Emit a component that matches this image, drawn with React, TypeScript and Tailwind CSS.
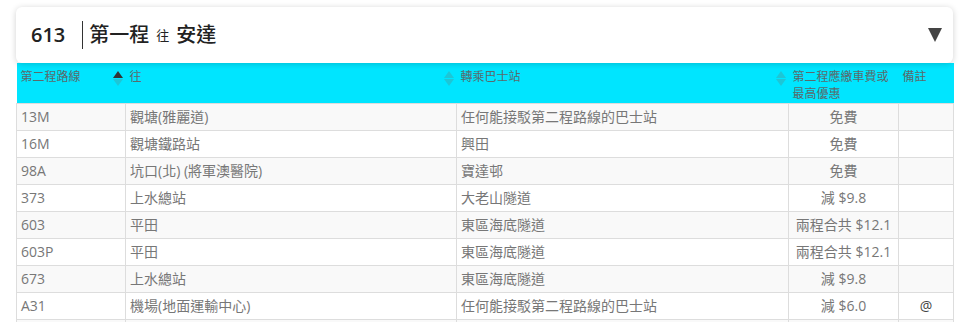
const rows = [
  ["13M", "觀塘(雅麗道)", "任何能接駁第二程路線的巴士站", "免費", ""],
  ["16M", "觀塘鐵路站", "興田", "免費", ""],
  ["98A", "坑口(北) (將軍澳醫院)", "寶達邨", "免費", ""],
  ["373", "上水總站", "大老山隧道", "減 $9.8", ""],
  ["603", "平田", "東區海底隧道", "兩程合共 $12.1", ""],
  ["603P", "平田", "東區海底隧道", "兩程合共 $12.1", ""],
  ["673", "上水總站", "東區海底隧道", "減 $9.8", ""],
  ["A31", "機場(地面運輸中心)", "任何能接駁第二程路線的巴士站", "減 $6.0", "@"],
  ["", "", "", "", ""],
]

function SortIcon({ active }: { active?: boolean }) {
  return (
    <span className="absolute left-[-13px] top-[8px] flex flex-col items-center gap-[1px]">
      <span
        className={
          "h-0 w-0 border-x-[5px] border-b-[7px] border-x-transparent " +
          (active ? "border-b-[#333]" : "border-b-[#1ec6d6]")
        }
      />
      <span className="h-0 w-0 border-x-[5px] border-t-[7px] border-x-transparent border-t-[#1ec6d6]" />
    </span>
  )
}

export default function App() {
  return (
    <div
      className="h-[322px] w-[961px] overflow-hidden bg-white pt-[7px] pl-[16px]"
      style={{ fontFamily: '"Open Sans", "Noto Sans CJK TC", sans-serif' }}
    >
      <div className="relative z-10 flex h-[56px] w-[937px] items-center rounded-[6px] bg-white pl-[15px] pr-[11px] shadow-[0_1px_6px_rgba(0,0,0,0.18)]">
        <span className="text-[20px] font-semibold leading-none text-[#222]">613</span>
        <span className="ml-[17px] h-[28px] w-px bg-[#333]" />
        <span className="ml-[6px] text-[20px] font-medium leading-none text-[#222]">第一程</span>
        <span className="ml-[7px] text-[13px] leading-none text-[#222]">往</span>
        <span className="ml-[7px] text-[20px] font-medium leading-none text-[#222]">安達</span>
        <span className="ml-auto h-0 w-0 border-x-[7px] border-t-[14px] border-x-transparent border-t-[#444]" />
      </div>
      <table className="w-[937px] table-fixed border-collapse text-[14px] text-[#777]">
        <colgroup>
          <col className="w-[109px]" />
          <col className="w-[331px]" />
          <col className="w-[332px]" />
          <col className="w-[110px]" />
          <col className="w-[55px]" />
        </colgroup>
        <thead>
          <tr className="h-[40px] bg-[#00e5ff] align-top text-[12px] leading-[17px] text-[#5a6a6c]">
            <th className="px-[4px] pt-[5px] text-left font-normal">第二程路線</th>
            <th className="relative px-[4px] pt-[5px] text-left font-normal">
              <SortIcon active />往
            </th>
            <th className="relative px-[4px] pt-[5px] text-left font-normal">
              <SortIcon />轉乘巴士站
            </th>
            <th className="relative px-[4px] pt-[5px] text-left font-normal">
              <SortIcon />第二程應繳車費或<br />最高優惠
            </th>
            <th className="px-[4px] pt-[5px] text-left font-normal">備註</th>
          </tr>
        </thead>
        <tbody>
          {rows.map((r, i) => (
            <tr key={i} className={"h-[27px] " + (i % 2 === 0 ? "bg-[#f9f9f9]" : "bg-white")}>
              <td className="border border-[#ddd] px-[4px] leading-[18px]">{r[0]}</td>
              <td className="border border-[#ddd] px-[4px] leading-[18px]">{r[1]}</td>
              <td className="border border-[#ddd] px-[4px] leading-[18px]">{r[2]}</td>
              <td className="border border-[#ddd] px-[4px] text-center leading-[18px]">{r[3]}</td>
              <td className="border border-[#ddd] px-[4px] text-center leading-[18px] text-[#444]">{r[4]}</td>
            </tr>
          ))}
        </tbody>
      </table>
    </div>
  )
}
